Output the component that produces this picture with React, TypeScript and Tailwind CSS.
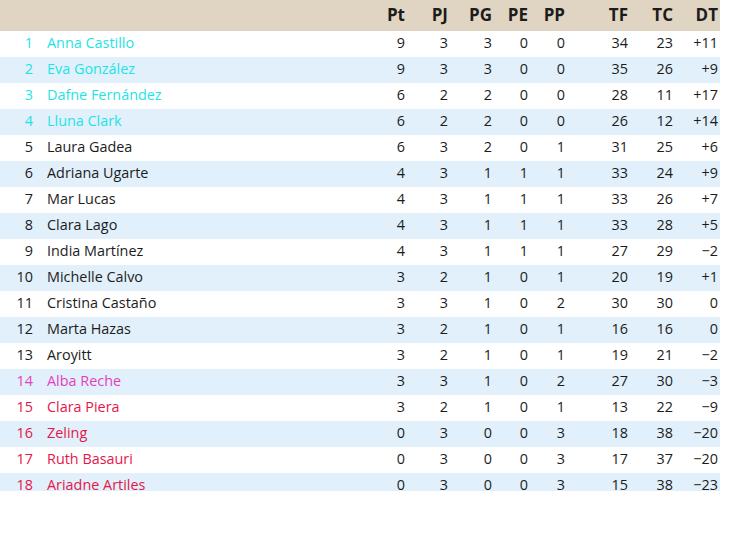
import React from "react";

type Row = [number, string, number, number, number, number, number, number, number, string, string];

const C = "text-[#1fe3e6]";
const P = "text-[#e43fbf]";
const R = "text-[#e5164a]";
const K = "text-[#1c1c1c]";

const rows: Row[] = [
  [1, "Anna Castillo", 9, 3, 3, 0, 0, 34, 23, "+11", C],
  [2, "Eva González", 9, 3, 3, 0, 0, 35, 26, "+9", C],
  [3, "Dafne Fernández", 6, 2, 2, 0, 0, 28, 11, "+17", C],
  [4, "Lluna Clark", 6, 2, 2, 0, 0, 26, 12, "+14", C],
  [5, "Laura Gadea", 6, 3, 2, 0, 1, 31, 25, "+6", K],
  [6, "Adriana Ugarte", 4, 3, 1, 1, 1, 33, 24, "+9", K],
  [7, "Mar Lucas", 4, 3, 1, 1, 1, 33, 26, "+7", K],
  [8, "Clara Lago", 4, 3, 1, 1, 1, 33, 28, "+5", K],
  [9, "India Martínez", 4, 3, 1, 1, 1, 27, 29, "\u22122", K],
  [10, "Michelle Calvo", 3, 2, 1, 0, 1, 20, 19, "+1", K],
  [11, "Cristina Castaño", 3, 3, 1, 0, 2, 30, 30, "0", K],
  [12, "Marta Hazas", 3, 2, 1, 0, 1, 16, 16, "0", K],
  [13, "Aroyitt", 3, 2, 1, 0, 1, 19, 21, "\u22122", K],
  [14, "Alba Reche", 3, 3, 1, 0, 2, 27, 30, "\u22123", P],
  [15, "Clara Piera", 3, 2, 1, 0, 1, 13, 22, "\u22129", R],
  [16, "Zeling", 0, 3, 0, 0, 3, 18, 38, "\u221220", R],
  [17, "Ruth Basauri", 0, 3, 0, 0, 3, 17, 37, "\u221220", R],
  [18, "Ariadne Artiles", 0, 3, 0, 0, 3, 15, 38, "\u221223", R],
];

const heads = ["Pt", "PJ", "PG", "PE", "PP", "TF", "TC", "DT"];
const grid = "grid grid-cols-[38px_332px_37px_43px_44px_36px_37px_63px_45px_45px]";

export default function App() {
  return (
    <div className="w-[731px] h-[545px] bg-white" style={{ fontFamily: '"Open Sans", "DejaVu Sans", sans-serif' }}>
      <div className="w-[720px] h-[491px] overflow-hidden">
        <div className={`${grid} h-[31px] items-center bg-[#e0d5c2] text-[17px] font-bold text-[#1c1c1c] pb-[1px]`}>
          <div />
          <div />
          {heads.map((h) => (
            <div key={h} className="text-right pr-[2px]">{h}</div>
          ))}
        </div>
        {rows.map((r, i) => {
          const [rank, name, pt, pj, pg, pe, pp, tf, tc, dt, color] = r;
          return (
            <div
              key={rank}
              className={`${grid} h-[26px] items-center text-[14.4px] leading-[20px] pb-[3px] ${i % 2 === 1 ? "bg-[#e1f0fb]" : "bg-white"}`}
            >
              <div className={`text-right pr-[5px] ${color}`}>{rank}</div>
              <div className={`pl-[9px] ${color}`}>{name}</div>
              {[pt, pj, pg, pe, pp, tf, tc, dt].map((v, j) => (
                <div key={j} className="text-right pr-[2px] text-[#1c1c1c]">{v}</div>
              ))}
            </div>
          );
        })}
      </div>
    </div>
  );
}
